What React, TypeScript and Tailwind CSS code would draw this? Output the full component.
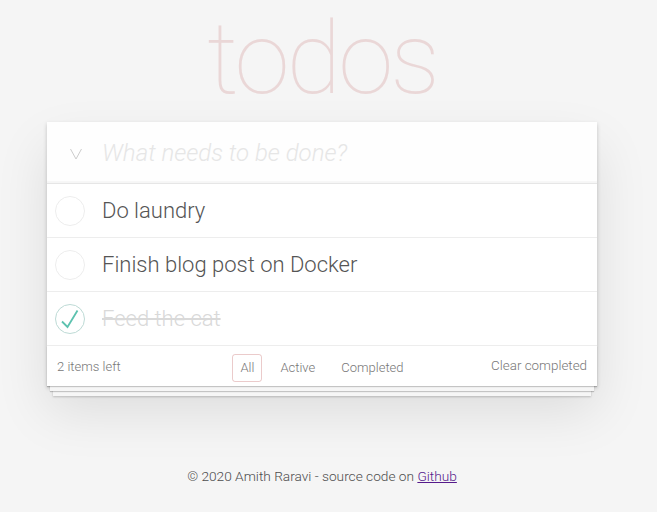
import React from "react";

type Todo = { id: number; title: string; done: boolean };

const todos: Todo[] = [
  { id: 1, title: "Do laundry", done: false },
  { id: 2, title: "Finish blog post on Docker", done: false },
  { id: 3, title: "Feed the cat", done: true },
];

function Toggle({ done }: { done: boolean }) {
  return (
    <svg width="30" height="30" viewBox="0 0 30 30" className="shrink-0">
      <circle
        cx="15"
        cy="15"
        r="14.5"
        fill="none"
        stroke={done ? "#bddad5" : "#ededed"}
        strokeWidth="1"
      />
      {done && (
        <path
          d="M7 17.5 L12.5 23 L22.5 6.5"
          fill="none"
          stroke="#5dc2af"
          strokeWidth="1.8"
        />
      )}
    </svg>
  );
}

function TodoItem({ todo }: { todo: Todo }) {
  return (
    <li className="flex h-[54px] items-center border-b border-[#ededed] pl-2">
      <Toggle done={todo.done} />
      <span
        className={
          todo.done
            ? "ml-[17px] text-[22px] font-light text-[#d9d9d9] line-through"
            : "ml-[17px] text-[22px] font-light text-[#555]"
        }
      >
        {todo.title}
      </span>
    </li>
  );
}

export default function App() {
  const left = todos.filter((t) => !t.done).length;

  return (
    <div className="min-h-screen w-full bg-[#f5f5f5] font-['Roboto',sans-serif] text-[#4d4d4d]">
      <div className="w-[644px]">
        <h1 className="h-[122px] pt-[1px] text-center text-[100px] leading-[116px] font-thin tracking-[-3px] text-[#ead7d7]">
          todos
        </h1>

        <section className="mx-auto w-[550px] bg-white shadow-[0_2px_4px_0_rgba(0,0,0,0.2),0_25px_50px_0_rgba(0,0,0,0.1)]">
          {/* new todo */}
          <header className="flex h-[61px] items-center bg-[rgba(0,0,0,0.003)] shadow-[inset_0_-2px_1px_rgba(0,0,0,0.03)]">
            <div className="flex w-[55px] justify-center pl-[2px] pt-[2px]">
              <svg width="12" height="12" viewBox="0 0 12 12">
                <polyline
                  points="0.5,1 6,11 11.5,1"
                  fill="none"
                  stroke="#cccccc"
                  strokeWidth="1"
                />
              </svg>
            </div>
            <span className="text-[24px] font-light italic text-[#e6e6e6]">
              What needs to be done?
            </span>
          </header>

          {/* list */}
          <ul className="border-t border-[#e6e6e6]">
            {todos.map((t) => (
              <TodoItem key={t.id} todo={t} />
            ))}
          </ul>

          {/* footer */}
          <footer className="relative flex h-[40px] items-center justify-between px-[10px] pt-[1px] text-[13px] font-light text-[#777] shadow-[0_1px_1px_rgba(0,0,0,0.2),0_8px_0_-3px_#f6f6f6,0_9px_1px_-3px_rgba(0,0,0,0.2),0_16px_0_-6px_#f6f6f6,0_17px_2px_-6px_rgba(0,0,0,0.2)]">
            <span>{left} items left</span>
            <div className="absolute left-0 right-0 top-[8px] flex justify-center gap-[10px]">
              <span className="rounded-[3px] border border-[rgba(175,47,47,0.25)] px-[7px] py-[3px]">
                All
              </span>
              <span className="rounded-[3px] border border-transparent px-[7px] py-[3px]">
                Active
              </span>
              <span className="rounded-[3px] border border-transparent px-[7px] py-[3px]">
                Completed
              </span>
            </div>
            <span className="relative text-[13.4px]">Clear completed</span>
          </footer>
        </section>

        <p className="mt-[80px] text-center text-[13.7px] font-light text-[#4d4d4d]">
          © 2020 Amith Raravi - source code on{" "}
          <a href="#" className="text-[#551a8b] underline">
            Github
          </a>
        </p>
      </div>
    </div>
  );
}
